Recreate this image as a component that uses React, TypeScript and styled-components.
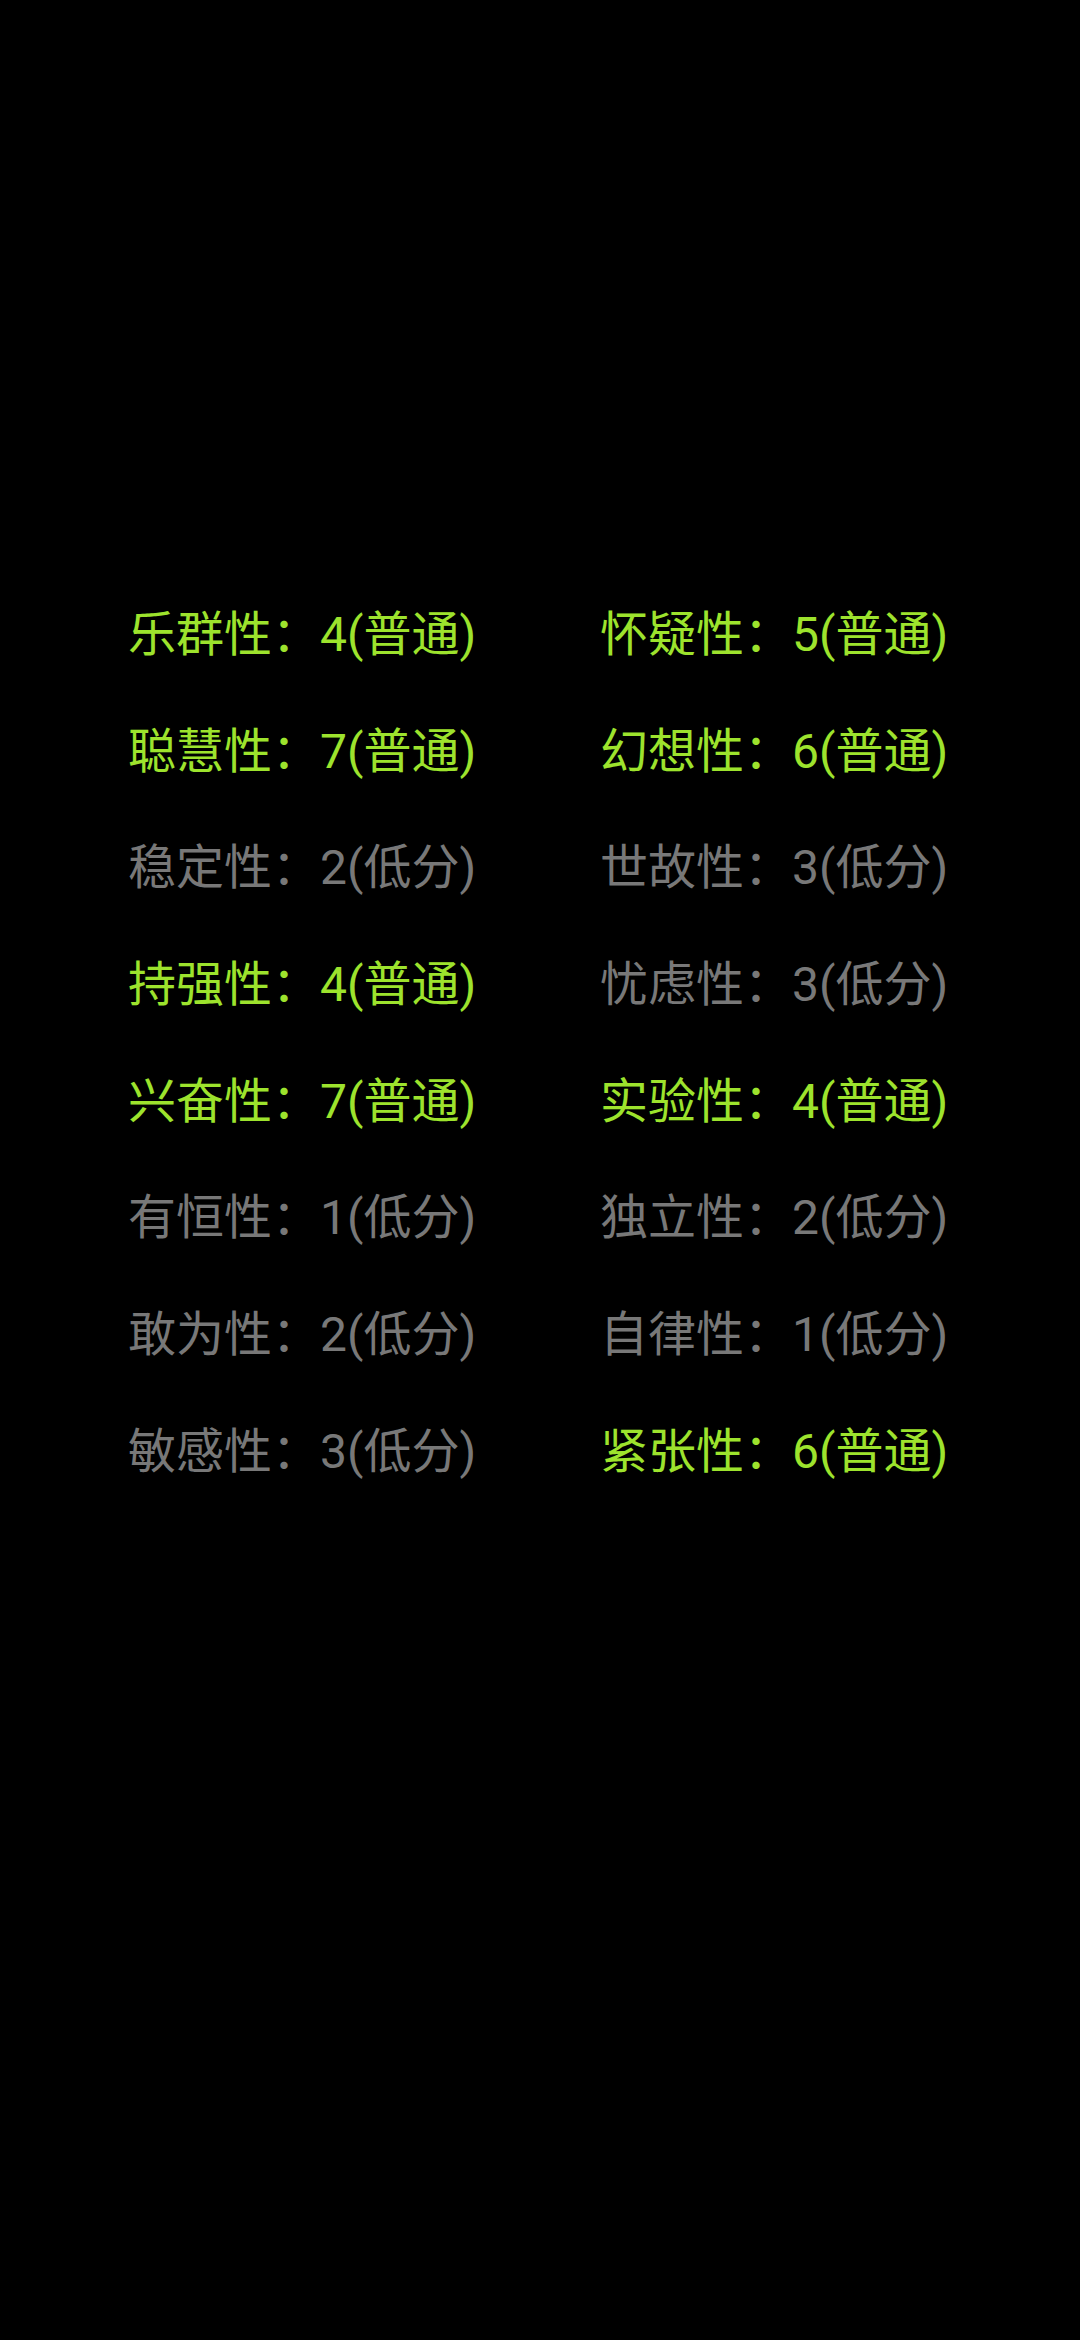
import React from 'react';
import styled, { createGlobalStyle } from 'styled-components';

const GlobalStyle = createGlobalStyle`
  html, body {
    margin: 0;
    padding: 0;
    background: #000;
  }
`;

const Screen = styled.div`
  width: 1080px;
  height: 2340px;
  background: #000;
  box-sizing: border-box;
  padding: 605px 0 0 128px;
`;

const TraitGrid = styled.div`
  display: grid;
  grid-template-columns: 472px 472px;
  row-gap: 56.7px;
`;

const Trait = styled.div<{ $normal: boolean }>`
  font-family: Roboto, "Noto Sans CJK SC", sans-serif;
  font-size: 48px;
  line-height: 60px;
  white-space: nowrap;
  color: ${(p) => (p.$normal ? '#9de32d' : '#787878')};
`;

interface TraitItem {
  name: string;
  score: number;
}

// left / right pairs, row by row
const traits: TraitItem[] = [
  { name: '乐群性', score: 4 },
  { name: '怀疑性', score: 5 },
  { name: '聪慧性', score: 7 },
  { name: '幻想性', score: 6 },
  { name: '稳定性', score: 2 },
  { name: '世故性', score: 3 },
  { name: '持强性', score: 4 },
  { name: '忧虑性', score: 3 },
  { name: '兴奋性', score: 7 },
  { name: '实验性', score: 4 },
  { name: '有恒性', score: 1 },
  { name: '独立性', score: 2 },
  { name: '敢为性', score: 2 },
  { name: '自律性', score: 1 },
  { name: '敏感性', score: 3 },
  { name: '紧张性', score: 6 },
];

const App: React.FC = () => {
  return (
    <>
      <GlobalStyle />
      <Screen>
        <TraitGrid>
          {traits.map((t) => {
            const normal = t.score >= 4;
            return (
              <Trait key={t.name} $normal={normal}>
                {t.name}：{t.score}({normal ? '普通' : '低分'})
              </Trait>
            );
          })}
        </TraitGrid>
      </Screen>
    </>
  );
};

export default App;
